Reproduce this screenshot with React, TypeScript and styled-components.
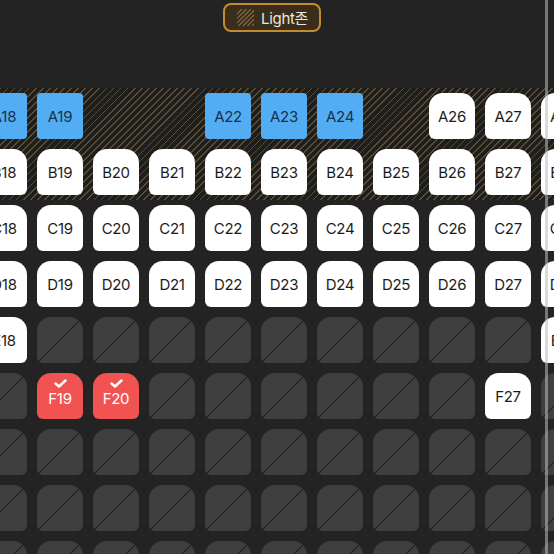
import React from "react";
import styled, { createGlobalStyle } from "styled-components";

type SeatKind = "open" | "blocked" | "held" | "picked" | "gap";

const GlobalStyle = createGlobalStyle`
  html, body {
    margin: 0;
    padding: 0;
    background: #232323;
    overflow: hidden;
  }
  * {
    box-sizing: border-box;
  }
`;

const Screen = styled.div`
  position: relative;
  width: 554px;
  height: 554px;
  overflow: hidden;
  background: #232323;
  font-family: Inter, "Noto Sans", "Noto Sans CJK KR", sans-serif;
`;

const Header = styled.div`
  display: flex;
  height: 88px;
  padding: 3px 0 0 223px;
`;

const ZoneBadge = styled.div`
  display: flex;
  align-items: center;
  gap: 7px;
  height: 29px;
  padding: 0 11px 0 12px;
  border: 2px solid #c38b2c;
  border-radius: 8px;
  background: #3a2d1b;
  color: #ece6dc;
  font-size: 15px;
  font-weight: 400;
  letter-spacing: -0.3px;
`;

const LightZone = styled.div`
  display: flex;
  flex-direction: column;
  gap: 10px;
  padding: 5px 0;
  background-color: #1e1e1c;
  background-image: repeating-linear-gradient(
    135deg,
    rgba(150, 125, 75, 0.5) 0px,
    rgba(150, 125, 75, 0.5) 1.2px,
    transparent 1.2px,
    transparent 5px
  );
`;

const Floor = styled.div`
  display: flex;
  flex-direction: column;
  gap: 10px;
  padding-top: 5px;
`;

const Row = styled.div`
  display: flex;
  gap: 10px;
  margin-left: -19px;
`;

const Seat = styled.div<{ $kind: SeatKind }>`
  flex: 0 0 46px;
  width: 46px;
  height: 46px;
  display: flex;
  flex-direction: column;
  align-items: center;
  justify-content: center;
  font-size: 15px;
  font-weight: 400;
  letter-spacing: -0.3px;
  border-radius: ${({ $kind }) => ($kind === "held" ? "4px" : "14px 14px 6px 6px")};
  visibility: ${({ $kind }) => ($kind === "gap" ? "hidden" : "visible")};
  color: ${({ $kind }) =>
    $kind === "held" ? "#17314d" : $kind === "picked" ? "#ffffff" : "#1c1c1c"};
  background: ${({ $kind }) =>
    $kind === "held"
      ? "#52adf3"
      : $kind === "picked"
      ? "#f15353"
      : $kind === "blocked"
      ? "linear-gradient(to bottom right, transparent calc(50% - 0.8px), #1c1c1c 50%, transparent calc(50% + 0.8px)), #3f3f3f"
      : "#ffffff"};
`;

const Check = styled.svg`
  width: 13px;
  height: 9px;
  margin-top: -5px;
  margin-bottom: 1px;
`;

const ScrollLine = styled.div`
  position: absolute;
  top: 0;
  bottom: 0;
  left: 545px;
  width: 3px;
  background: rgba(190, 190, 190, 0.55);
`;

const COLS = [18, 19, 20, 21, 22, 23, 24, 25, 26, 27, 28];

const rows: { letter: string; kinds: SeatKind[] }[] = [
  {
    letter: "A",
    kinds: ["held", "held", "gap", "gap", "held", "held", "held", "gap", "open", "open", "open"],
  },
  { letter: "B", kinds: COLS.map(() => "open") },
  { letter: "C", kinds: COLS.map(() => "open") },
  { letter: "D", kinds: COLS.map(() => "open") },
  {
    letter: "E",
    kinds: ["open", ...COLS.slice(1, 10).map((): SeatKind => "blocked"), "open"],
  },
  {
    letter: "F",
    kinds: ["blocked", "picked", "picked", "blocked", "blocked", "blocked", "blocked", "blocked", "blocked", "open", "blocked"],
  },
  { letter: "G", kinds: COLS.map(() => "blocked") },
  { letter: "H", kinds: COLS.map(() => "blocked") },
  { letter: "I", kinds: COLS.map(() => "blocked") },
];

const StripeIcon = () => (
  <svg width="17" height="17" viewBox="0 0 17 17">
    {[2, 6.5, 11, 15.5, 20, 24.5, 29].map((o) => (
      <line key={o} x1={o - 14} y1="17" x2={o + 3} y2="0" stroke="#8a7143" strokeWidth="1.1" />
    ))}
  </svg>
);

const SeatRow = ({ letter, kinds }: { letter: string; kinds: SeatKind[] }) => (
  <Row>
    {COLS.map((n, i) => {
      const kind = kinds[i];
      const showLabel = kind !== "blocked" && kind !== "gap";
      return (
        <Seat key={n} $kind={kind}>
          {kind === "picked" && (
            <Check viewBox="0 0 13 9">
              <path d="M1.5 4.5 L5 7.5 L11.5 1.5" fill="none" stroke="#fff" strokeWidth="2.4" strokeLinecap="round" strokeLinejoin="round" />
            </Check>
          )}
          {showLabel && `${letter}${n}`}
        </Seat>
      );
    })}
  </Row>
);

export default function App() {
  return (
    <Screen>
      <GlobalStyle />
      <Header>
        <ZoneBadge>
          <StripeIcon />
          Light존
        </ZoneBadge>
      </Header>
      <LightZone>
        {rows.slice(0, 2).map((r) => (
          <SeatRow key={r.letter} {...r} />
        ))}
      </LightZone>
      <Floor>
        {rows.slice(2).map((r) => (
          <SeatRow key={r.letter} {...r} />
        ))}
      </Floor>
      <ScrollLine />
    </Screen>
  );
}
